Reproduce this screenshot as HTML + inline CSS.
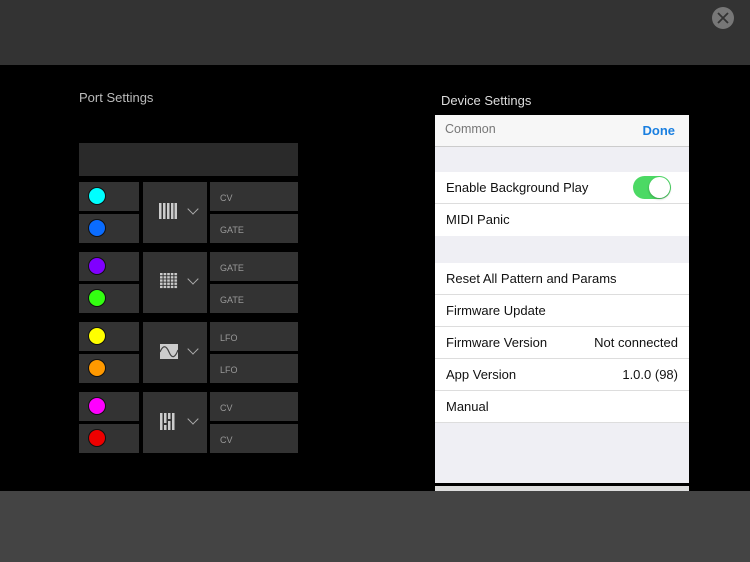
<!DOCTYPE html><html><head><style>
*{margin:0;padding:0;box-sizing:border-box}
body{width:750px;height:562px;background:#000;position:relative;overflow:hidden;font-family:"Liberation Sans",sans-serif}
.a{position:absolute}
.c{background:#333}
.dot{position:absolute;left:9px;top:5px;width:18px;height:18px;border-radius:50%;border:1px solid #111}
.lb{color:#999;font-size:9px;padding:11px 0 0 10px}
.row{position:absolute;left:0;width:254px;height:32px;background:#fff;font-size:13px;color:#111;padding:8px 0 0 11px;border-bottom:1px solid #ddd}
.row span{position:absolute;right:11px;top:8px}
.chev{position:absolute;left:46px;top:23px;width:8px;height:8px;border-right:1.3px solid #aaa;border-bottom:1.3px solid #aaa;transform:rotate(45deg)}
</style></head><body>
<div class="a" style="left:0;top:0;width:750px;height:65px;background:#333"></div>
<div class="a" style="left:712px;top:7px;width:22px;height:22px;border-radius:50%;background:#777"><svg width="22" height="22"><path d="M6 6L16 16M16 6L6 16" stroke="#333" stroke-width="1.8"/></svg></div>
<div class="a" style="left:0;top:491px;width:750px;height:71px;background:#444"></div>
<div class="a" style="left:79px;top:90px;color:#bbb;font-size:13px">Port Settings</div>
<div class="a" style="left:441px;top:93px;color:#ddd;font-size:13px">Device Settings</div>
<div class="a c" style="left:79px;top:143px;width:219px;height:33px;background:#2a2a2a"></div>

<div class="a" style="left:79px;top:182px">
<div class="a c" style="left:0;top:0;width:60px;height:29px"><div class="dot" style="background:#0ff"></div></div>
<div class="a c" style="left:0;top:32px;width:60px;height:29px"><div class="dot" style="background:#0a6cff"></div></div>
<div class="a c" style="left:64px;top:0;width:64px;height:61px"><svg class="a" style="left:16px;top:21px" width="18" height="16"><g fill="#ccc"><rect x="0" width="2.5" height="16"/><rect x="4" width="2.5" height="16"/><rect x="8" width="2.5" height="16"/><rect x="12" width="2.5" height="16"/><rect x="15.5" width="2.5" height="16"/></g></svg><div class="chev"></div></div>
<div class="a c lb" style="left:131px;top:0;width:88px;height:29px">CV</div>
<div class="a c lb" style="left:131px;top:32px;width:88px;height:29px">GATE</div></div>

<div class="a" style="left:79px;top:252px">
<div class="a c" style="left:0;top:0;width:60px;height:29px"><div class="dot" style="background:#8000ff"></div></div>
<div class="a c" style="left:0;top:32px;width:60px;height:29px"><div class="dot" style="background:#33ff11"></div></div>
<div class="a c" style="left:64px;top:0;width:64px;height:61px"><svg class="a" style="left:17px;top:21px" width="18" height="16"><defs><pattern id="p" width="3.6" height="3.2" patternUnits="userSpaceOnUse"><rect width="2.6" height="2.3" fill="#ccc"/></pattern></defs><rect width="18" height="16" fill="url(#p)"/></svg><div class="chev"></div></div>
<div class="a c lb" style="left:131px;top:0;width:88px;height:29px">GATE</div>
<div class="a c lb" style="left:131px;top:32px;width:88px;height:29px">GATE</div></div>

<div class="a" style="left:79px;top:322px">
<div class="a c" style="left:0;top:0;width:60px;height:29px"><div class="dot" style="background:#ff0"></div></div>
<div class="a c" style="left:0;top:32px;width:60px;height:29px"><div class="dot" style="background:#ff9900"></div></div>
<div class="a c" style="left:64px;top:0;width:64px;height:61px"><svg class="a" style="left:17px;top:22px" width="18" height="15"><rect width="18" height="15" fill="#ccc"/><path d="M0 8C3 1 6 1 9 8S15 14 18 6" stroke="#444" fill="none" stroke-width="1.2"/></svg><div class="chev"></div></div>
<div class="a c lb" style="left:131px;top:0;width:88px;height:29px">LFO</div>
<div class="a c lb" style="left:131px;top:32px;width:88px;height:29px">LFO</div></div>

<div class="a" style="left:79px;top:392px">
<div class="a c" style="left:0;top:0;width:60px;height:29px"><div class="dot" style="background:#ff00ff"></div></div>
<div class="a c" style="left:0;top:32px;width:60px;height:29px"><div class="dot" style="background:#ee0000"></div></div>
<div class="a c" style="left:64px;top:0;width:64px;height:61px"><svg class="a" style="left:17px;top:21px" width="16" height="17"><g fill="#ccc"><rect x="0" width="2.5" height="17"/><rect x="4" width="2.5" height="10"/><rect x="4" y="12" width="2.5" height="5"/><rect x="8" width="2.5" height="6"/><rect x="8" y="8" width="2.5" height="9"/><rect x="12" width="2.5" height="17"/></g></svg><div class="chev"></div></div>
<div class="a c lb" style="left:131px;top:0;width:88px;height:29px">CV</div>
<div class="a c lb" style="left:131px;top:32px;width:88px;height:29px">CV</div></div>

<div class="a" style="left:435px;top:115px;width:254px;height:368px;background:#efeff4">
<div class="a" style="left:0;top:0;width:254px;height:32px;background:#f7f7f7;border-bottom:1px solid #ccc"><span class="a" style="left:10px;top:7px;font-size:12.5px;color:#777">Common</span><span class="a" style="right:14px;top:8px;font-size:13px;color:#1a7fe0;font-weight:bold">Done</span></div>
<div class="row" style="top:57px">Enable Background Play<div class="a" style="right:18px;top:4px;width:38px;height:23px;border-radius:12px;background:#4cd964"><div class="a" style="right:1px;top:1px;width:21px;height:21px;border-radius:50%;background:#fff;box-shadow:0 1px 2px rgba(0,0,0,.3)"></div></div></div>
<div class="row" style="top:89px;border:none">MIDI Panic</div>
<div class="row" style="top:148px">Reset All Pattern and Params</div>
<div class="row" style="top:180px">Firmware Update</div>
<div class="row" style="top:212px">Firmware Version<span>Not connected</span></div>
<div class="row" style="top:244px">App Version<span>1.0.0 (98)</span></div>
<div class="row" style="top:276px">Manual</div>
</div>
<div class="a" style="left:435px;top:486px;width:254px;height:5px;background:#ddd"></div>
</body></html>
